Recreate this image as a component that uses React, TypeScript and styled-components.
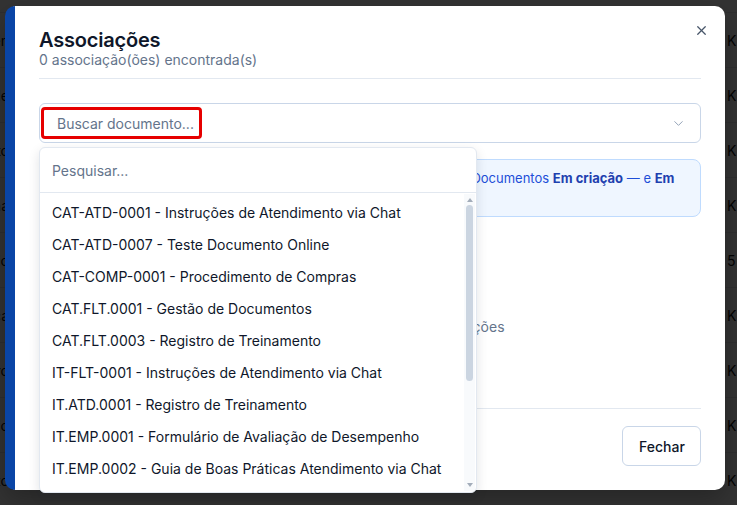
import React from 'react';
import styled, { createGlobalStyle } from 'styled-components';
import { X, ChevronDown } from 'lucide-react';

const GlobalStyle = createGlobalStyle`
  * { box-sizing: border-box; }
  html, body {
    margin: 0;
    padding: 0;
    width: 737px;
    height: 505px;
    overflow: hidden;
    background: #fff;
    font-family: Inter, "Noto Sans", sans-serif;
  }
`;

// Page behind the overlay: just a table, mostly hidden
const Page = styled.div`
  position: relative;
  width: 737px;
  height: 505px;
  overflow: hidden;
  background: #fff;
`;

const Table = styled.div`
  display: flex;
  flex-direction: column;
  margin-top: -42px;
`;

const TableRow = styled.div`
  display: flex;
  align-items: center;
  justify-content: space-between;
  height: 55px;
  border-bottom: 1px solid #e5e7eb;
  font-size: 14px;
  color: #111;
`;

const LeftCell = styled.span`
  width: 9px;
  overflow: hidden;
  direction: rtl;
  white-space: nowrap;
`;

const RightCell = styled.span`
  width: 10px;
  white-space: nowrap;
  overflow: hidden;
`;

const Overlay = styled.div`
  position: absolute;
  inset: 0;
  background: rgba(0, 0, 0, 0.8);
`;

// Modal
const Modal = styled.div`
  position: absolute;
  left: 5px;
  top: 6px;
  width: 720px;
  height: 484px;
  background: #fff;
  border-left: 10px solid #0a45a6;
  border-radius: 10px;
  display: flex;
  flex-direction: column;
  padding: 0 24px 24px 24px;
  box-shadow: 0 10px 25px rgba(0, 0, 0, 0.25);
`;

const CloseButton = styled.button`
  position: absolute;
  top: 16px;
  right: 16px;
  width: 16px;
  height: 16px;
  padding: 0;
  border: none;
  background: transparent;
  color: #475569;
  display: flex;
  align-items: center;
  justify-content: center;
`;

const Header = styled.div`
  padding-top: 22px;
  padding-bottom: 10px;
  border-bottom: 1px solid #e2e8f0;
`;

const Title = styled.h2`
  margin: 0;
  font-size: 20px;
  line-height: 24px;
  font-weight: 600;
  color: #0f172a;
  letter-spacing: -0.2px;
`;

const Subtitle = styled.p`
  margin: 0;
  font-size: 14px;
  line-height: 16px;
  color: #64748b;
`;

const Body = styled.div`
  flex: 1;
  display: flex;
  flex-direction: column;
  gap: 16px;
  padding-top: 24px;
  position: relative;
`;

const SelectTrigger = styled.div`
  height: 40px;
  border: 1px solid #c9d6e8;
  border-radius: 6px;
  display: flex;
  align-items: center;
  justify-content: space-between;
  padding: 0 14px 0 1px;
  color: #94a3b8;
`;

const Highlight = styled.span`
  border: 3px solid #e60000;
  border-radius: 4px;
  height: 32px;
  display: flex;
  align-items: center;
  padding: 0 0 0 13px;
  width: 161px;
  font-size: 14px;
  color: #64748b;
`;

const InfoBox = styled.div`
  border: 1px solid #bfdbfe;
  background: #eff6ff;
  border-radius: 8px;
  padding: 8px 12px;
  font-size: 13px;
  line-height: 20px;
  color: #1d4ed8;

  strong {
    font-weight: 700;
    color: #1e40af;
  }
`;

const EmptyState = styled.div`
  flex: 1;
  display: flex;
  flex-direction: column;
  align-items: center;
  justify-content: center;
  gap: 8px;
  color: #94a3b8;
  padding-top: 12px;
`;

const EmptyText = styled.span`
  font-size: 14px;
  color: #64748b;
`;

const Footer = styled.div`
  border-top: 1px solid #e2e8f0;
  padding-top: 17px;
  display: flex;
  justify-content: flex-end;
`;

const OutlineButton = styled.button`
  height: 40px;
  padding: 0 16px;
  border: 1px solid #c9d6e8;
  border-radius: 6px;
  background: #fff;
  font-family: Inter, sans-serif;
  font-size: 14px;
  font-weight: 500;
  color: #0f172a;
  width: 79px;
`;

// Dropdown popover
const Popover = styled.div`
  position: absolute;
  left: 0;
  top: 68px;
  width: 438px;
  height: 346px;
  background: #fff;
  border: 1px solid #e2e8f0;
  border-radius: 6px;
  box-shadow: 0 4px 12px rgba(15, 23, 42, 0.12);
  display: flex;
  flex-direction: column;
  overflow: hidden;
`;

const SearchRow = styled.div`
  height: 45px;
  flex-shrink: 0;
  display: flex;
  align-items: center;
  padding: 0 12px;
  border-bottom: 1px solid #e2e8f0;
  font-size: 14px;
  color: #64748b;
`;

const ListArea = styled.div`
  flex: 1;
  position: relative;
  min-height: 0;
  display: flex;
`;

const List = styled.div`
  flex: 1;
  overflow-y: scroll;
  padding: 3px 0 4px;
  scrollbar-width: none;
  &::-webkit-scrollbar { display: none; }
`;

const Item = styled.div`
  height: 32px;
  display: flex;
  align-items: center;
  padding: 0 12px;
  font-size: 14px;
  color: #0f172a;
  white-space: nowrap;
`;

// Fake scrollbar drawn over the list
const ScrollTrack = styled.div`
  position: absolute;
  top: 1px;
  bottom: 1px;
  right: 1px;
  width: 11px;
  background: #f8fafc;
  display: flex;
  flex-direction: column;
  align-items: center;
  padding: 4px 0;
`;

const Arrow = styled.span<{ $down?: boolean }>`
  width: 0;
  height: 0;
  border-left: 3px solid transparent;
  border-right: 3px solid transparent;
  ${({ $down }) =>
    $down ? 'border-top: 4px solid #a3adba;' : 'border-bottom: 4px solid #a3adba;'}
  flex-shrink: 0;
`;

const ThumbSlot = styled.div`
  flex: 1;
  width: 100%;
  padding: 3px 2px;
`;

const Thumb = styled.div`
  width: 7px;
  margin: 0 auto;
  border-radius: 4px;
  background: #cbd5e1;
`;

const rows = [
  'Documento', 'Treinamen', 'Manual de', 'Procedimento', 'Planilha',
  'Relatório', 'Política', 'Registro', 'Formulário', 'Anexo',
];

const items = [
  'CAT-ATD-0001 - Instruções de Atendimento via Chat',
  'CAT-ATD-0007 - Teste Documento Online',
  'CAT-COMP-0001 - Procedimento de Compras',
  'CAT.FLT.0001 - Gestão de Documentos',
  'CAT.FLT.0003 - Registro de Treinamento',
  'IT-FLT-0001 - Instruções de Atendimento via Chat',
  'IT.ATD.0001 - Registro de Treinamento',
  'IT.EMP.0001 - Formulário de Avaliação de Desempenho',
  'IT.EMP.0002 - Guia de Boas Práticas Atendimento via Chat',
  'IT.EMP.0003 - Política de Segurança da Informação',
  'IT.EMP.0004 - Manual do Colaborador',
  'POP.ATD.0002 - Procedimento de Reclamações',
  'POP.FIN.0001 - Controle de Pagamentos',
  'REG.QLD.0001 - Registro de Não Conformidades',
];

export default function App() {
  return (
    <>
      <GlobalStyle />
      <Page>
        <Table>
          {rows.map((r, i) => (
            <TableRow key={i}>
              <LeftCell>{r}</LeftCell>
              <RightCell>{i === 5 ? '5 KB' : 'KB'}</RightCell>
            </TableRow>
          ))}
        </Table>
        <Overlay />
        <Modal>
          <CloseButton aria-label="Fechar">
            <X size={15} strokeWidth={2} />
          </CloseButton>
          <Header>
            <Title>Associações</Title>
            <Subtitle>0 associação(ões) encontrada(s)</Subtitle>
          </Header>
          <Body>
            <SelectTrigger>
              <Highlight>Buscar documento...</Highlight>
              <ChevronDown size={15} strokeWidth={1.6} />
            </SelectTrigger>
            <InfoBox>
              Somente documentos publicados podem ser associados entre eles. Documentos{' '}
              <strong>Em criação</strong> — e <strong>Em revisão</strong> — não aparecem na busca.
            </InfoBox>
            <EmptyState>
              <EmptyText>Este documento não possui associações</EmptyText>
            </EmptyState>
            <Popover>
              <SearchRow>Pesquisar...</SearchRow>
              <ListArea>
                <List>
                  {items.map((it) => (
                    <Item key={it}>{it}</Item>
                  ))}
                </List>
                <ScrollTrack>
                  <Arrow />
                  <ThumbSlot>
                    <Thumb style={{ height: `${Math.round((9 / items.length) * 100)}%` }} />
                  </ThumbSlot>
                  <Arrow $down />
                </ScrollTrack>
              </ListArea>
            </Popover>
          </Body>
          <Footer>
            <OutlineButton>Fechar</OutlineButton>
          </Footer>
        </Modal>
      </Page>
    </>
  );
}
